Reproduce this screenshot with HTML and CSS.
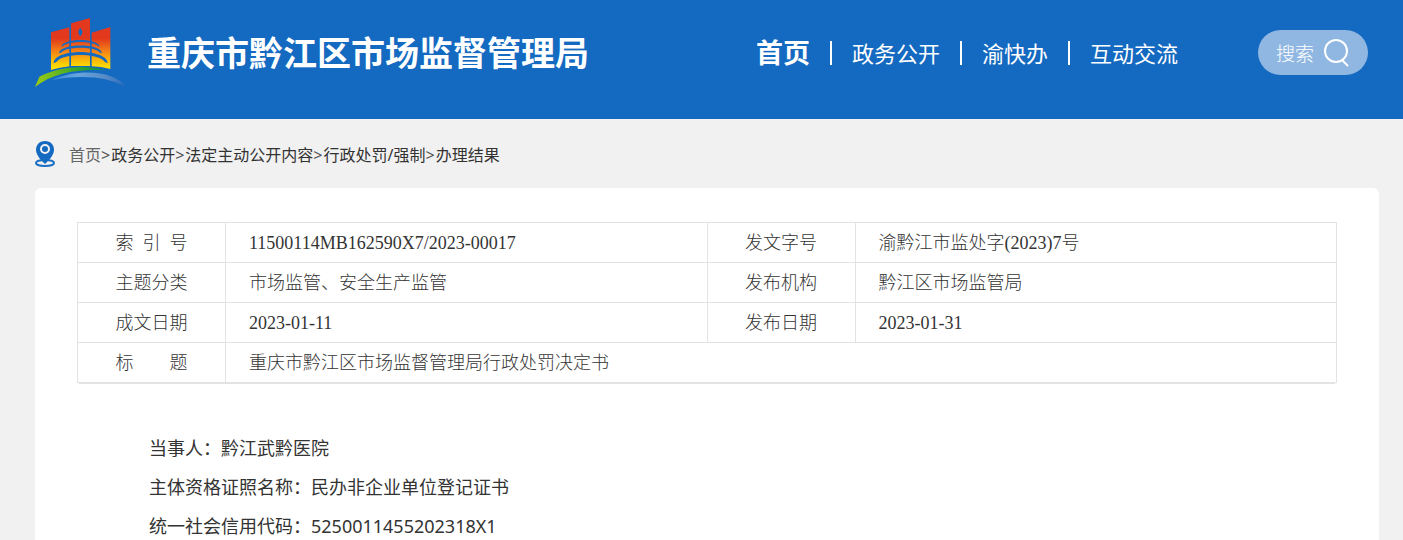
FILE: index.html
```html
<!DOCTYPE html>
<html lang="zh-CN">
<head>
    <meta charset="UTF-8">
    <meta name="viewport" content="width=device-width, initial-scale=1.0">
    <title>重庆市黔江区市场监督管理局</title>
    <link rel="stylesheet" href="styles.css">
</head>
<body>
    <header class="header">
        <a class="brand" href="#">
            <svg class="logo" viewBox="45 39 270 207" aria-hidden="true">
                <defs>
                    <linearGradient id="tower" gradientUnits="userSpaceOnUse" x1="0" y1="100" x2="0" y2="185">
                        <stop offset="0" stop-color="#e2381d"/>
                        <stop offset="0.5" stop-color="#f58a16"/>
                        <stop offset="1" stop-color="#fddc00"/>
                    </linearGradient>
                    <linearGradient id="hill" x1="0" y1="0" x2="1" y2="0">
                        <stop offset="0" stop-color="#9bcb14"/>
                        <stop offset="0.7" stop-color="#27a02f"/>
                        <stop offset="1" stop-color="#128a5c"/>
                    </linearGradient>
                    <linearGradient id="river" x1="0" y1="0" x2="1" y2="0">
                        <stop offset="0" stop-color="#2f86d6"/>
                        <stop offset="0.35" stop-color="#67a5de"/>
                        <stop offset="0.75" stop-color="#5589c6"/>
                        <stop offset="1" stop-color="#2a6fbd"/>
                    </linearGradient>
                </defs>
                <g fill="url(#tower)">
                    <path d="M93 82L148 67V184Q118 187 93 195Z"/>
                    <path d="M153 55L210 39V183H153Z"/>
                    <path d="M215 83L271 66V192Q244 185 215 184Z"/>
                </g>
                <path d="M181 69Q168 82 181 94Q194 82 181 69Z" fill="#1469c0"/>
                <g fill="#1469c0">
                    <path d="M124 125C126 98 236 98 239 125Q234 124 230 120C211 108 152 108 133 120Q129 124 124 125Z"/>
                    <path d="M117 145C119 114 244 114 246 145Q239 144 234 138C213 125 150 125 129 138Q124 144 117 145Z"/>
                    <path d="M101 175C101 130 262 130 263 175Q255 173 249 165C222 145 142 145 115 165Q109 173 101 175Z"/>
                </g>
                <path d="M45 246L58 215C110 188 190 176 258 196C170 192 100 204 45 246Z" fill="url(#hill)"/>
                <path d="M94 225C180 186 290 200 315 244C260 214 180 208 94 225Z" fill="url(#river)"/>
            </svg>
            <span class="site-name">重庆市黔江区市场监督管理局</span>
        </a>
        <nav class="nav">
            <a class="active" href="#">首页</a>
            <a href="#">政务公开</a>
            <a href="#">渝快办</a>
            <a href="#">互动交流</a>
        </nav>
        <button class="search" type="button">
            搜索
            <svg class="search-icon" viewBox="0 0 26 28" fill="none" stroke="#fff" stroke-width="2" aria-hidden="true">
                <circle cx="12" cy="12" r="11"/>
                <path d="M18 21L24 27"/>
            </svg>
        </button>
    </header>

    <main class="main">
        <div class="crumbs">
            <svg class="pin" viewBox="0 0 20 26" aria-hidden="true">
                <ellipse cx="10" cy="22" rx="9" ry="3" fill="none" stroke="#1b6fc4" stroke-width="2"/>
                <path d="M10 0C4 0 1 4 1 9C1 14 6 19 10 23C14 19 19 14 19 9C19 4 16 0 10 0Z" fill="#1469c0"/>
                <circle cx="10" cy="8" r="4" fill="#1469c0" stroke="#f1f1f1" stroke-width="2"/>
            </svg>
            <div class="crumb-text"><a class="home" href="#">首页</a>&gt;<a href="#">政务公开</a>&gt;<a href="#">法定主动公开内容</a>&gt;<a href="#">行政处罚/强制</a>&gt;<a href="#">办理结果</a></div>
        </div>

        <div class="card">
            <table class="info">
                <tr>
                    <th scope="row">索&ensp;引&ensp;号</th>
                    <td>11500114MB162590X7/2023-00017</td>
                    <th scope="row">发文字号</th>
                    <td>渝黔江市监处字(2023)7号</td>
                </tr>
                <tr>
                    <th scope="row">主题分类</th>
                    <td>市场监管、安全生产监管</td>
                    <th scope="row">发布机构</th>
                    <td>黔江区市场监管局</td>
                </tr>
                <tr>
                    <th scope="row">成文日期</th>
                    <td>2023-01-11</td>
                    <th scope="row">发布日期</th>
                    <td>2023-01-31</td>
                </tr>
                <tr>
                    <th scope="row">标&emsp;&emsp;题</th>
                    <td colspan="3">重庆市黔江区市场监督管理局行政处罚决定书</td>
                </tr>
            </table>

            <div class="content">
                <p>当事人：黔江武黔医院</p>
                <p>主体资格证照名称：民办非企业单位登记证书</p>
                <p>统一社会信用代码：5250011455202318X1</p>
            </div>
        </div>
    </main>
</body>
</html>
```
FILE: styles.css
```css
* {
    margin: 0;
    padding: 0;
    box-sizing: border-box;
}

body {
    font-family: "Noto Sans", "Noto Sans CJK SC", sans-serif;
    background: #f1f1f1;
    color: #333;
}

a {
    color: inherit;
    text-decoration: none;
}

/* Header */
.header {
    display: flex;
    align-items: center;
    padding: 18px 35px 32px;
    background: #1469c0;
    color: #fff;
}

.brand {
    display: flex;
    align-items: center;
    gap: 22px;
    margin-right: auto;
}

.logo {
    width: 90px;
    height: 69px;
}

.site-name {
    font-size: 34px;
    line-height: 50px;
    font-weight: bold;
    white-space: nowrap;
}

.nav {
    display: flex;
    align-items: center;
    margin-right: 80px;
    font-size: 22px;
    line-height: 34px;
    white-space: nowrap;
}

.nav a {
    display: flex;
    align-items: center;
}

.nav a + a::before {
    content: "";
    width: 2px;
    height: 24px;
    margin: 0 20px;
    background: #fff;
}

.nav .active {
    font-size: 27px;
    font-weight: bold;
}

.search {
    display: flex;
    align-items: center;
    justify-content: center;
    gap: 10px;
    width: 110px;
    height: 45px;
    border: none;
    border-radius: 23px;
    background: #90b7e1;
    color: #fff;
    font-family: inherit;
    font-size: 19px;
    font-weight: 300;
    cursor: pointer;
}

.search-icon {
    width: 26px;
    height: 28px;
}

/* Breadcrumb */
.main {
    padding: 0 24px 0 35px;
}

.crumbs {
    display: flex;
    align-items: center;
    gap: 14px;
    height: 69px;
    font-size: 16px;
    color: #555;
}

.crumbs a {
    color: #333;
}

.crumbs a + a {
    margin-left: 1px;
}

.crumbs .home {
    color: #666;
}

.pin {
    width: 20px;
    height: 26px;
}

/* Document */
.card {
    padding: 34px 42px 40px;
    border-radius: 6px;
    background: #fff;
}

.info {
    width: 100%;
    table-layout: fixed;
    border-collapse: collapse;
    box-shadow: 0 3px 0 -2px #e3e3e3;
    font-family: "Liberation Serif", "Noto Sans CJK SC", serif;
    font-size: 18px;
    line-height: 24px;
    color: #333;
}

.info th,
.info td {
    height: 40px;
    border: 1px solid #e3e3e3;
    font-weight: 300;
}

.info th {
    width: 148px;
    text-align: center;
}

.info td {
    padding: 0 23px;
    text-align: left;
}

.content {
    margin-top: 46px;
    padding: 0 36px;
    font-size: 18px;
    line-height: 39px;
}

.content p {
    text-indent: 2em;
}
```
